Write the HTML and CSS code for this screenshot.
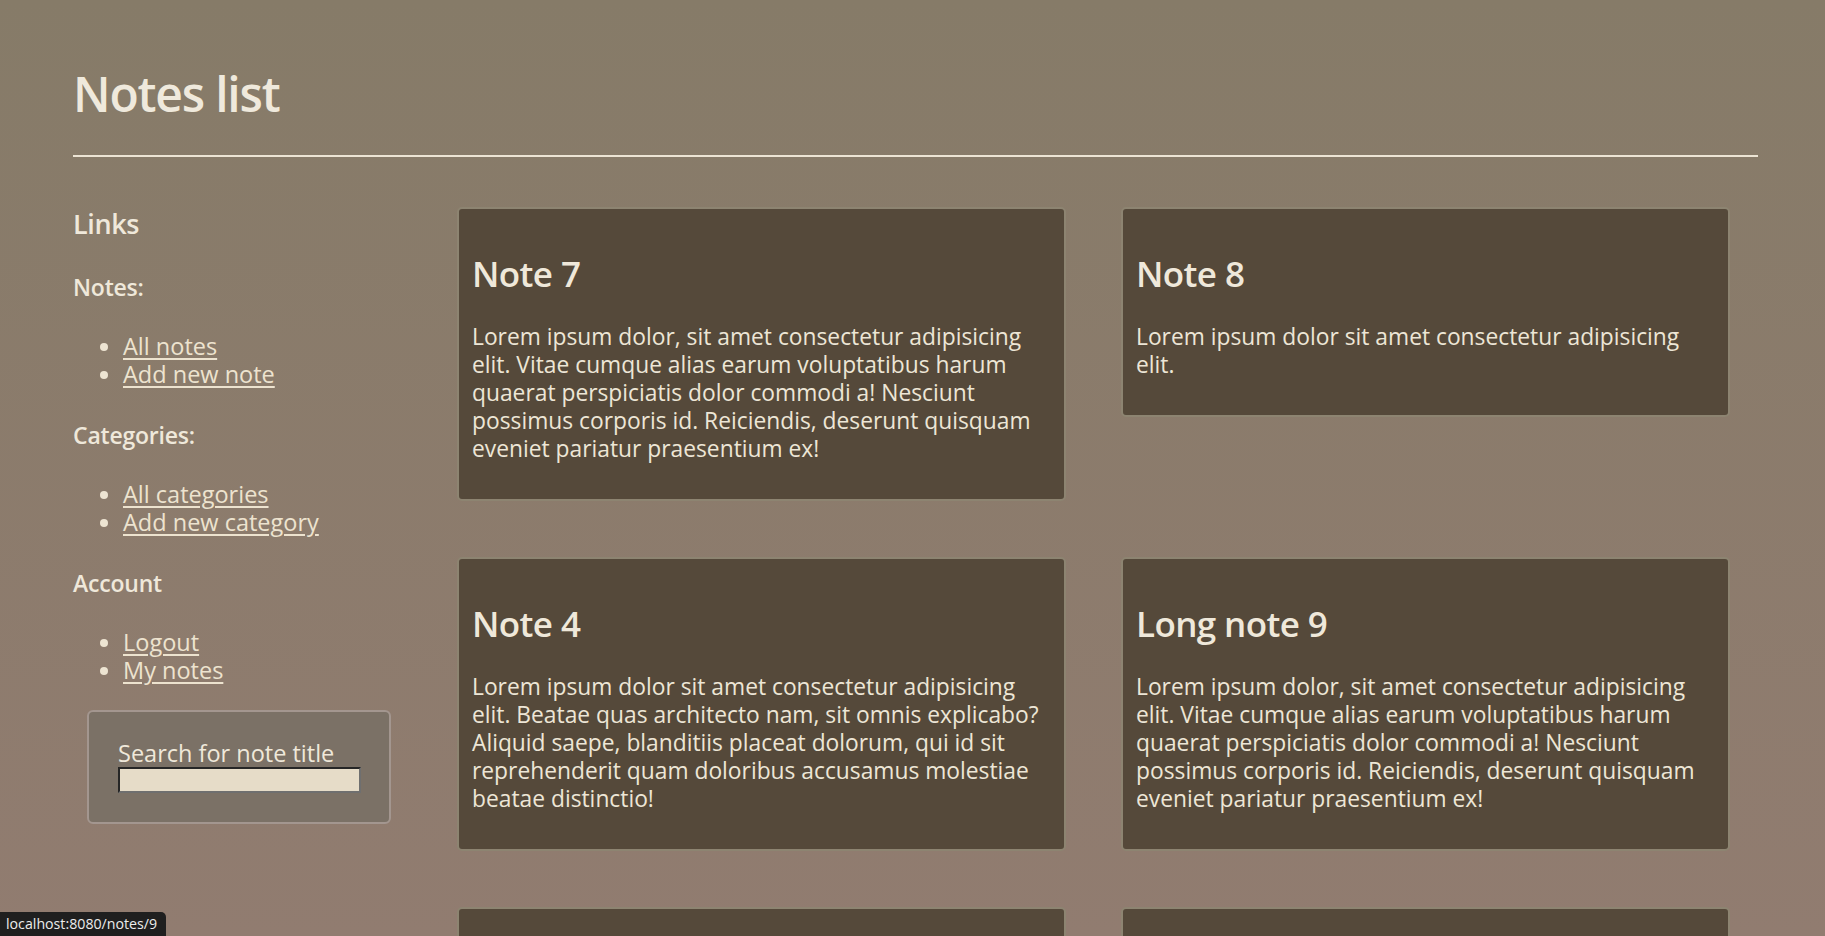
FILE: index.html
```html
<!DOCTYPE html>
<html lang="en">
<head>
<meta charset="utf-8">
<title>Notes list</title>
<link rel="stylesheet" href="styles.css">
</head>
<body>
<div class="page">
  <header class="header">
    <h1 class="title">Notes list</h1>
  </header>
  <hr class="rule">
  <div class="layout">
    <aside class="sidebar">
      <h3 class="side-title">Links</h3>
      <h4 class="side-heading">Notes:</h4>
      <ul class="side-list">
        <li><a class="side-link" href="#">All notes</a></li>
        <li><a class="side-link" href="#">Add new note</a></li>
      </ul>
      <h4 class="side-heading">Categories:</h4>
      <ul class="side-list">
        <li><a class="side-link" href="#">All categories</a></li>
        <li><a class="side-link" href="#">Add new category</a></li>
      </ul>
      <h4 class="side-heading">Account</h4>
      <ul class="side-list">
        <li><a class="side-link" href="#">Logout</a></li>
        <li><a class="side-link" href="#">My notes</a></li>
      </ul>
      <form class="search">
        <label class="search-label" for="search-title">Search for note title</label>
        <input class="search-input" id="search-title" type="text">
      </form>
    </aside>
    <main class="notes">
      <article class="note">
        <h2 class="note-title">Note 7</h2>
        <p class="note-text">Lorem ipsum dolor, sit amet consectetur adipisicing elit. Vitae cumque alias earum voluptatibus harum quaerat perspiciatis dolor commodi a! Nesciunt possimus corporis id. Reiciendis, deserunt quisquam eveniet pariatur praesentium ex!</p>
      </article>
      <article class="note">
        <h2 class="note-title">Note 8</h2>
        <p class="note-text">Lorem ipsum dolor sit amet consectetur adipisicing elit.</p>
      </article>
      <article class="note">
        <h2 class="note-title">Note 4</h2>
        <p class="note-text">Lorem ipsum dolor sit amet consectetur adipisicing elit. Beatae quas architecto nam, sit omnis explicabo? Aliquid saepe, blanditiis placeat dolorum, qui id sit reprehenderit quam doloribus accusamus molestiae beatae distinctio!</p>
      </article>
      <article class="note">
        <h2 class="note-title">Long note 9</h2>
        <p class="note-text">Lorem ipsum dolor, sit amet consectetur adipisicing elit. Vitae cumque alias earum voluptatibus harum quaerat perspiciatis dolor commodi a! Nesciunt possimus corporis id. Reiciendis, deserunt quisquam eveniet pariatur praesentium ex!</p>
      </article>
      <article class="note">
        <h2 class="note-title">Note 5</h2>
        <p class="note-text">Lorem ipsum dolor sit amet consectetur adipisicing elit.</p>
      </article>
      <article class="note">
        <h2 class="note-title">Note 6</h2>
        <p class="note-text">Lorem ipsum dolor sit amet consectetur adipisicing elit.</p>
      </article>
    </main>
  </div>
</div>
<div class="status">localhost:8080/notes/9</div>
</body>
</html>
```
FILE: styles.css
```css
html, body {
  margin: 0;
  padding: 0;
}

body {
  min-height: 100vh;
  background: linear-gradient(180deg, #867b68 0%, #917c70 100%) fixed;
  color: #efe8da;
  font-family: "Open Sans", "Noto Sans", sans-serif;
}

.page {
  padding: 66px 67px 80px 73px;
}

.header {
  display: flex;
}

.title {
  margin: 0;
  font-size: 48px;
  font-weight: 600;
  line-height: 56px;
  color: #efe9dc;
  letter-spacing: -1.2px;
}

.rule {
  margin: 33px 0 0;
  border: 0;
  height: 2px;
  background: #ece4d4;
}

.layout {
  display: flex;
  align-items: flex-start;
  padding-top: 50px;
}

.sidebar {
  flex: 0 0 384px;
  display: flex;
  flex-direction: column;
  align-items: flex-start;
  padding-top: 1px;
}

.side-title {
  margin: 0;
  font-size: 27px;
  font-weight: 600;
  line-height: 32px;
  letter-spacing: -0.4px;
  color: #efe8da;
}

.side-heading {
  margin: 33px 0 0;
  font-size: 23px;
  font-weight: 600;
  line-height: 28px;
  letter-spacing: -0.2px;
  color: #efe8da;
}

.side-list {
  margin: 31px 0 0;
  padding-left: 50px;
  font-size: 23.5px;
  line-height: 28px;
  color: #ede4d2;
}

.side-link {
  color: #ede3cf;
  text-decoration: underline;
  text-decoration-thickness: 1.5px;
  text-underline-offset: 3px;
}

.search {
  margin: 26px 0 0 14px;
  width: 304px;
  box-sizing: border-box;
  padding: 27px 29px 29px;
  background: #7b7166;
  border: 2px solid #a3968f;
  border-radius: 6px;
}

.search-label {
  display: block;
  font-size: 23.5px;
  line-height: 28px;
  color: #efe8da;
}

.search-input {
  display: block;
  box-sizing: border-box;
  width: 243px;
  height: 26px;
  margin: 0;
  padding: 0 4px;
  background: #e6dcc8;
  border-style: solid;
  border-width: 2px;
  border-color: #262626 #6f6f6f #6f6f6f #262626;
}

.notes {
  display: grid;
  grid-template-columns: 609px 609px;
  column-gap: 55px;
  row-gap: 56px;
  align-items: start;
}

.note {
  box-sizing: border-box;
  background: #55493a;
  border: 2px solid #8d8471;
  border-radius: 5px;
  padding: 13px;
}

.note-title {
  margin: 31px 0 0;
  font-size: 35px;
  font-weight: 600;
  line-height: 41px;
  letter-spacing: -0.6px;
  color: #efe8da;
}

.note-text {
  margin: 29px 0 23px;
  font-size: 22.8px;
  line-height: 28px;
  color: #ede6d6;
}

.status {
  position: fixed;
  left: 0;
  bottom: 0;
  height: 24px;
  padding: 0 9px 0 6px;
  background: #1f1f1f;
  color: #ececec;
  font-family: "Open Sans", sans-serif;
  font-size: 14.2px;
  line-height: 24px;
  border-top-right-radius: 5px;
}
```
